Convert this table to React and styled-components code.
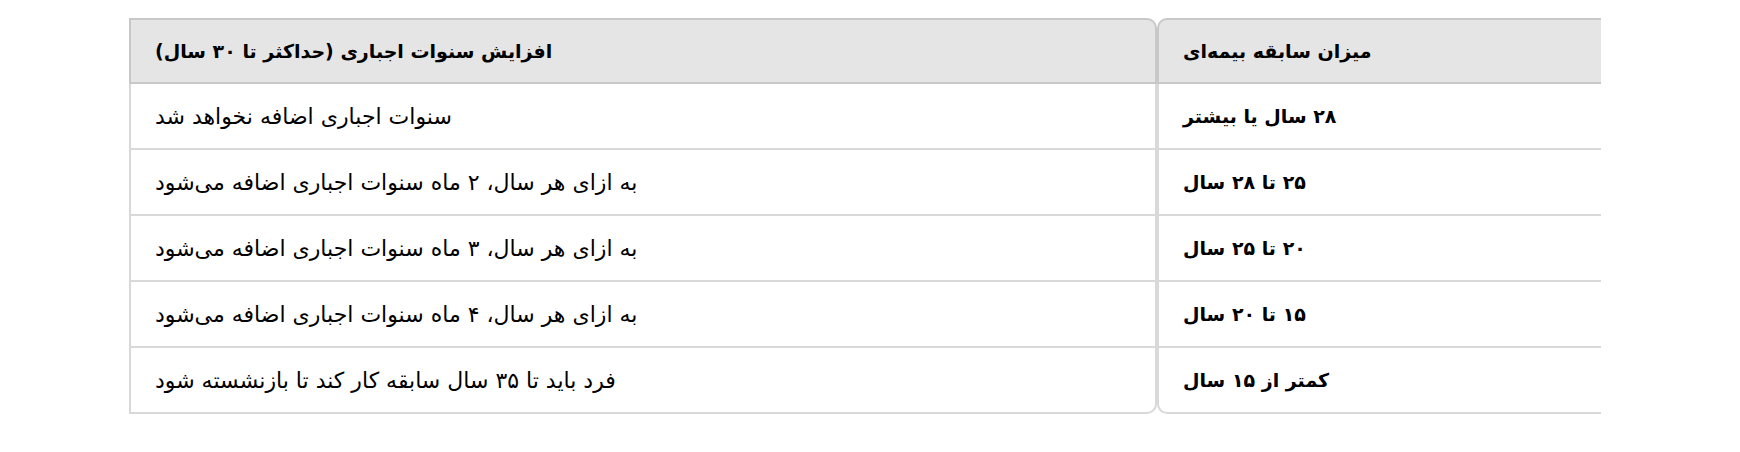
import React from 'react';
import styled, { createGlobalStyle } from 'styled-components';

const GlobalStyle = createGlobalStyle`
  body {
    margin: 0;
    background: #ffffff;
  }
`;

const Page = styled.div`
  padding: 18px 0 0 129px;
`;

const Table = styled.table`
  direction: rtl;
  border-collapse: separate;
  border-spacing: 0;
  font-family: "DejaVu Sans", "Liberation Sans", sans-serif;
  color: #000;
`;

const cellBase = `
  box-sizing: border-box;
  height: 66px;
  padding: 0 24px;
  text-align: left;
  vertical-align: middle;
  white-space: nowrap;
`;

const HeadCell = styled.th`
  ${cellBase}
  width: ${p => p.$width}px;
  font-size: 19px;
  font-weight: bold;
  background: #e5e5e5;
  border-top: 2px solid #c8c8c8;
  border-bottom: 2px solid #c8c8c8;
  border-left: 2px solid #c8c8c8;
  border-right: ${p => (p.$key ? 'none' : '2px solid #c8c8c8')};
  border-top-left-radius: ${p => (p.$key ? '10px' : '0')};
  border-top-right-radius: ${p => (p.$key ? '0' : '10px')};
`;

const Cell = styled.td`
  ${cellBase}
  font-size: ${p => (p.$key ? '19px' : '22px')};
  font-weight: ${p => (p.$key ? 'bold' : 'normal')};
  background: #fff;
  border-bottom: 2px solid #d9d9d9;
  border-left: 2px solid #d9d9d9;
  border-right: ${p => (p.$key ? 'none' : '2px solid #d9d9d9')};
  tr:last-child > & {
    border-bottom-left-radius: ${p => (p.$key ? '10px' : '0')};
    border-bottom-right-radius: ${p => (p.$key ? '0' : '10px')};
  }
`;

const rows = [
  ['۲۸ سال یا بیشتر', 'سنوات اجباری اضافه نخواهد شد'],
  ['۲۵ تا ۲۸ سال', 'به ازای هر سال، ۲ ماه سنوات اجباری اضافه می‌شود'],
  ['۲۰ تا ۲۵ سال', 'به ازای هر سال، ۳ ماه سنوات اجباری اضافه می‌شود'],
  ['۱۵ تا ۲۰ سال', 'به ازای هر سال، ۴ ماه سنوات اجباری اضافه می‌شود'],
  ['کمتر از ۱۵ سال', 'فرد باید تا ۳۵ سال سابقه کار کند تا بازنشسته شود'],
];

export default function App() {
  return (
    <Page>
      <GlobalStyle />
      <Table>
        <thead>
          <tr>
            <HeadCell $key $width={444}>میزان سابقه بیمه‌ای</HeadCell>
            <HeadCell $width={1028}>افزایش سنوات اجباری (حداکثر تا ۳۰ سال)</HeadCell>
          </tr>
        </thead>
        <tbody>
          {rows.map(([term, rule]) => (
            <tr key={term}>
              <Cell $key>{term}</Cell>
              <Cell>{rule}</Cell>
            </tr>
          ))}
        </tbody>
      </Table>
    </Page>
  );
}
